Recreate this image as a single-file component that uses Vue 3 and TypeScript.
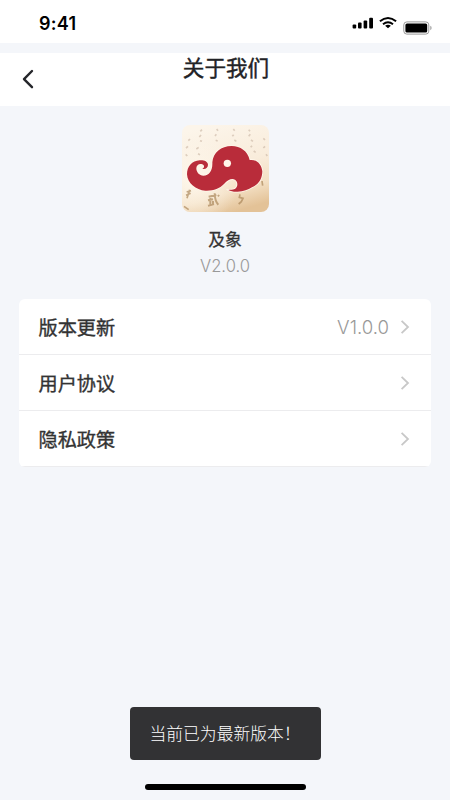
<script setup lang="ts">
interface Row {
  label: string
  value?: string
}

const rows: Row[] = [
  { label: '版本更新', value: 'V1.0.0' },
  { label: '用户协议' },
  { label: '隐私政策' },
]
</script>

<template>
  <div class="screen">
    <header class="status">
      <span class="time">9:41</span>
      <div class="indicators">
        <svg class="signal" width="22" height="12" viewBox="0 0 22 12">
          <rect x="0.6" y="7.6" width="3.6" height="3.8" rx="1" />
          <rect x="6" y="5.6" width="3.6" height="5.8" rx="1" />
          <rect x="11.6" y="3.4" width="3.6" height="8" rx="1" />
          <rect x="17.2" y="0.8" width="3.8" height="10.6" rx="1" />
        </svg>
        <svg class="wifi" width="18" height="12" viewBox="0 0 18 12">
          <path d="M0.9 4.3Q9 -2.2 17.1 4.3M4 7.2Q9 3.4 14 7.2" fill="none" stroke="#000" stroke-width="2" />
          <path d="M6.1 8.8Q9 6.8 11.9 8.8L9 11.3Z" />
        </svg>
        <svg class="battery" width="30" height="14" viewBox="0 0 30 14">
          <rect x="0.8" y="0.9" width="25" height="12.2" rx="3" fill="#fff" stroke="#999" />
          <rect x="2.4" y="2.5" width="21.8" height="9" rx="1.6" />
          <path d="M27.2 4.8Q28.7 5.4 28.7 7Q28.7 8.6 27.2 9.2Z" fill="#aaa" />
        </svg>
      </div>
    </header>

    <nav class="nav">
      <svg class="back" width="14" height="20" viewBox="0 0 14 20">
        <path d="M11 2L3 10.2L11 18.2" fill="none" stroke="#25262a" stroke-width="2.4" stroke-linecap="round" stroke-linejoin="round" />
      </svg>
      <h1 class="title">关于我们</h1>
    </nav>

    <section class="brand">
      <div class="logo">
        <svg width="87" height="87" viewBox="36 30 261 261">
          <defs>
            <linearGradient id="paper" x1="0.3" y1="0" x2="0.6" y2="1">
              <stop offset="0" stop-color="#fcf5ea" />
              <stop offset="0.5" stop-color="#f9ecdb" />
              <stop offset="0.78" stop-color="#f3dfc3" />
              <stop offset="1" stop-color="#e3c297" />
            </linearGradient>
            <radialGradient id="light" cx="0.15" cy="0.65" r="0.5">
              <stop offset="0" stop-color="#fffaf0" stop-opacity="0.8" />
              <stop offset="1" stop-color="#fffaf0" stop-opacity="0" />
            </radialGradient>
            <filter id="soften">
              <feGaussianBlur stdDeviation="1.8" />
            </filter>
          </defs>
          <rect x="36" y="30" width="261" height="261" fill="url(#paper)" />
          <rect x="36" y="30" width="261" height="261" fill="url(#light)" />
          <g class="marks" filter="url(#soften)">
            <path d="M96 44l-5 5M93 60l-5 6M90 77l6 2M86 97l-7 5M84 116l6 3M140 42l4 5M139 58l-4 5M137 76l6 2M190 42l4 5M191 59l-4 5M193 75l6 4M236 44l4 5M241 58l-5 6M243 75l6 4M246 92l-4 5M251 108l6 4M60 72l-5 5M54 94l-6 5M47 118l5 5M280 70l5 5M285 94l-5 5M288 118l4 5" />
          </g>
          <g class="ink" filter="url(#soften)">
            <path d="M50 231l13-4M48 241l14-6M59 224l-8 26M42 274l14 10" />
            <path d="M116 245l23-5M114 256l15-3M121 250v20M114 272l18-5M129 258v10M134 235q1 25 11 34M144 240l3 4" class="bold" />
            <path d="M210 238l-2 9l11 3l-5 10l-8 7M276 198l2 14" />
          </g>
          <path class="halo" d="M97 161C106 164 114 158 114 149C113 139 102 135 89 136C66 138 51 154 51 178C52 204 78 226 106 227C130 228 148 221 162 207C174 194 185 189 195 194C205 201 204 216 194 222C188 225 181 224 175 225C183 229 193 231 203 230C221 230 234 224 246 217C267 208 277 190 277 169C275 148 260 132 239 135C233 108 211 93 185 93C153 93 130 112 127 142C128 166 119 182 100 182C88 182 79 172 79 160C79 149 89 144 97 148C104 151 104 158 97 161Z" />
          <path class="elephant" d="M97 161C106 164 114 158 114 149C113 139 102 135 89 136C66 138 51 154 51 178C52 204 78 226 106 227C130 228 148 221 162 207C174 194 185 189 195 194C205 201 204 216 194 222C188 225 181 224 175 225C183 229 193 231 203 230C221 230 234 224 246 217C267 208 277 190 277 169C275 148 260 132 239 135C233 108 211 93 185 93C153 93 130 112 127 142C128 166 119 182 100 182C88 182 79 172 79 160C79 149 89 144 97 148C104 151 104 158 97 161Z" />
          <circle cx="172" cy="145" r="11" fill="#fff5e9" />
        </svg>
      </div>
      <p class="name">及象</p>
      <p class="version">V2.0.0</p>
    </section>

    <ul class="list">
      <li v-for="row in rows" :key="row.label" class="row">
        <span class="label">{{ row.label }}</span>
        <span v-if="row.value" class="value">{{ row.value }}</span>
        <svg class="chevron" width="10" height="16" viewBox="0 0 10 16">
          <path d="M1.6 1.8L8 8L1.6 14.2" fill="none" stroke="#c8c8c8" stroke-width="1.8" />
        </svg>
      </li>
    </ul>

    <footer class="bottom">
      <div class="toast">当前已为最新版本！</div>
      <div class="home"></div>
    </footer>
  </div>
</template>

<style>
body {
  margin: 0;
  background: #f4f6fa;
}
</style>

<style scoped>
.screen {
  display: flex;
  flex-direction: column;
  width: 450px;
  height: 800px;
  overflow: hidden;
  background: #f4f6fa;
  color: #333;
  font-family: "Noto Sans CJK SC", sans-serif;
}

.status {
  display: flex;
  justify-content: space-between;
  box-sizing: border-box;
  height: 43px;
  padding: 12px 17px 0 39px;
  background: #fff;
}

.time {
  color: #000;
  font: 600 18px/23px Inter, sans-serif;
  letter-spacing: 0.25px;
}

.indicators {
  display: flex;
  align-items: flex-start;
}

.signal {
  margin: 5px 5px 0 0;
}

.wifi {
  margin: 5px 6px 0 0;
}

.battery {
  margin-top: 8.5px;
}

.nav {
  display: grid;
  grid-template-columns: 101px 1fr 99px;
  height: 53px;
  margin-top: 10px;
  background: #fff;
}

.back {
  margin: 16px 0 0 21px;
}

.title {
  margin: 0;
  color: #222326;
  font-size: 21.6px;
  font-weight: 400;
  -webkit-text-stroke: 0.4px #222326;
  line-height: 28px;
  text-align: center;
}

.brand {
  display: flex;
  flex-direction: column;
  align-items: center;
  padding-top: 19px;
}

.logo {
  width: 87px;
  height: 87px;
  overflow: hidden;
  border-radius: 8px;
}

.logo svg {
  display: block;
}

.marks {
  fill: none;
  stroke: #c9b5a3;
  stroke-width: 5;
  opacity: 0.6;
}

.ink {
  fill: none;
  stroke: #a68152;
  stroke-width: 5;
  opacity: 0.65;
}

.bold {
  stroke-width: 6;
}

.halo {
  fill: #fff5e9;
  stroke: #fff5e9;
  stroke-width: 5;
}

.elephant {
  fill: #b92c3a;
}

.name {
  margin: 15px 0 0;
  font-size: 16.8px;
  font-weight: 400;
  -webkit-text-stroke: 0.3px #333;
  line-height: 24px;
}

.version {
  margin: 3px 0 0;
  color: #999;
  font-family: Inter, sans-serif;
  font-size: 16.6px;
  font-weight: 300;
  line-height: 24px;
}

.list {
  margin: 21px 19px 0;
  padding: 0;
  overflow: hidden;
  border-radius: 6px;
  background: #fff;
  list-style: none;
}

.row {
  display: flex;
  align-items: center;
  box-sizing: border-box;
  height: 56px;
  padding: 0 21px 0 19.5px;
  border-bottom: 1px solid #ececee;
}

.label {
  margin-right: auto;
  font-size: 19.2px;
  font-weight: 400;
  -webkit-text-stroke: 0.35px #333;
}

.value {
  margin-right: 11px;
  color: #999;
  font-family: Inter, sans-serif;
  font-size: 18.6px;
  font-weight: 300;
}

.bottom {
  display: flex;
  flex-direction: column;
  align-items: center;
  margin-top: auto;
}

.toast {
  box-sizing: border-box;
  width: 191px;
  height: 53px;
  padding-left: 20px;
  border-radius: 4px;
  background: #323234;
  color: #fff;
  font-size: 16.8px;
  font-weight: 300;
  line-height: 53px;
  white-space: nowrap;
}

.home {
  width: 161px;
  height: 6px;
  margin: 24px 0 10px;
  border-radius: 3px;
  background: #000;
}
</style>
